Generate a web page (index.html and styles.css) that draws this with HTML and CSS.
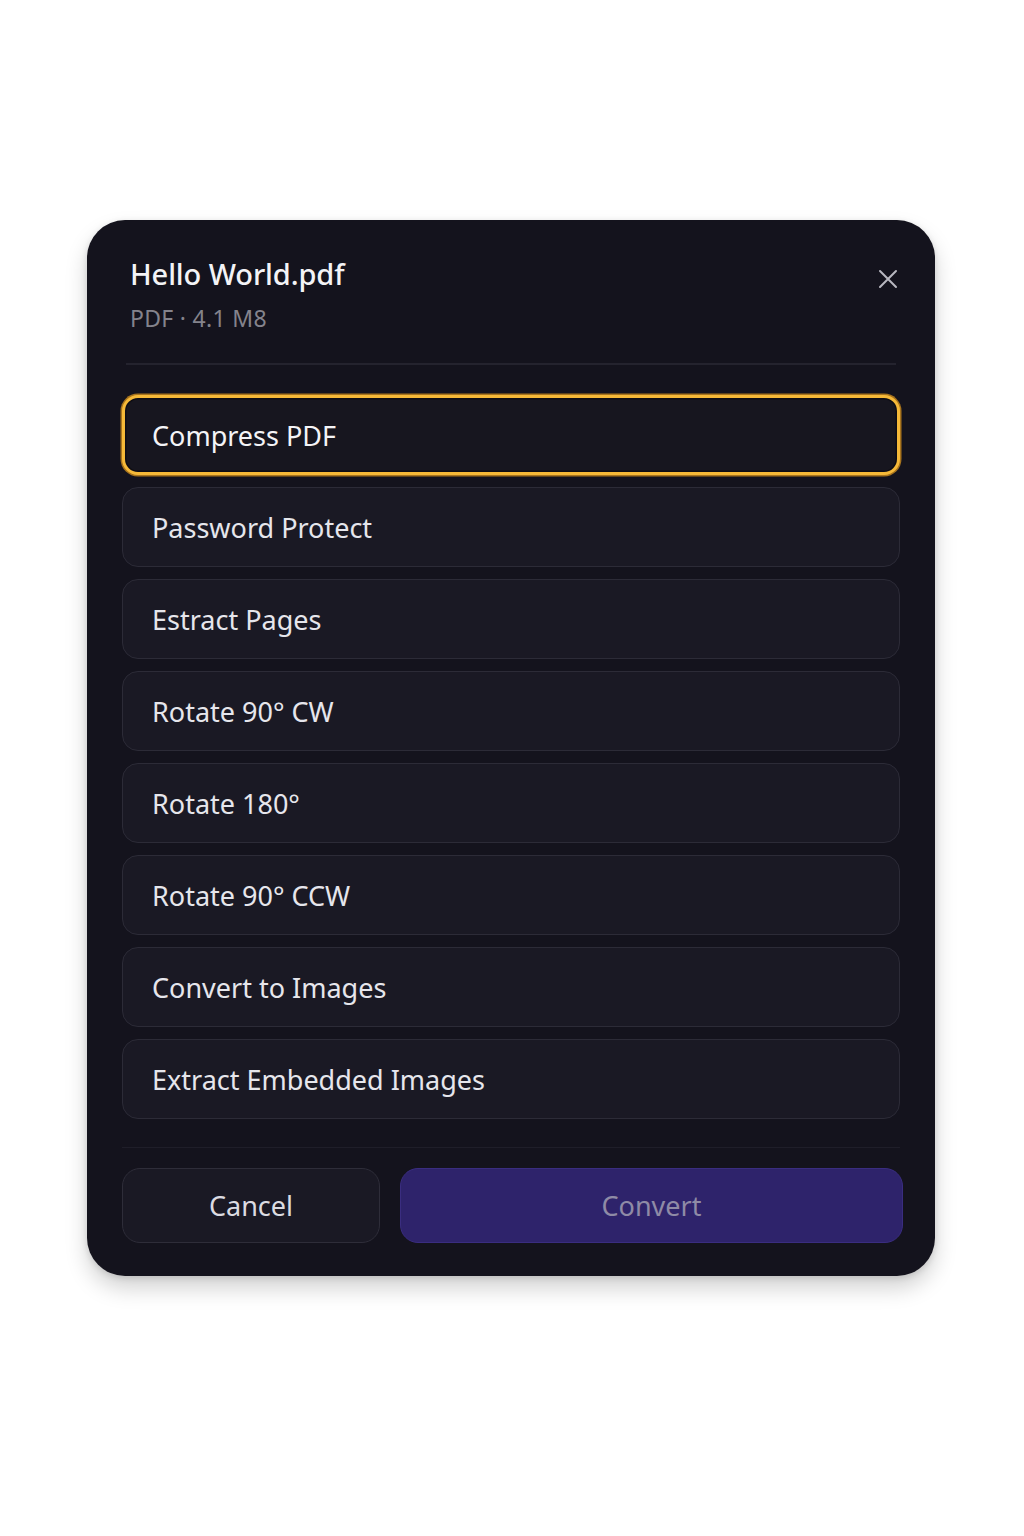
FILE: index.html
```html
<!DOCTYPE html>
<html lang="en">
<head>
<meta charset="utf-8">
<title>Hello World.pdf</title>
<link rel="stylesheet" href="styles.css">
</head>
<body>
<main class="stage">
  <section class="dialog">
    <header class="dialog-header">
      <div class="file-info">
        <h1 class="file-name">Hello World.pdf</h1>
        <p class="file-meta">PDF · 4.1 M8</p>
      </div>
      <button class="close-btn" aria-label="Close">
        <svg width="22" height="22" viewBox="0 0 22 22" fill="none" stroke="#b9b8c0" stroke-width="2" stroke-linecap="round">
          <path d="M3 3L19 19M19 3L3 19"/>
        </svg>
      </button>
    </header>
    <div class="divider"></div>
    <ul class="options">
      <li class="option selected">Compress PDF</li>
      <li class="option">Password Protect</li>
      <li class="option">Estract Pages</li>
      <li class="option">Rotate 90° CW</li>
      <li class="option">Rotate 180°</li>
      <li class="option">Rotate 90° CCW</li>
      <li class="option">Convert to Images</li>
      <li class="option">Extract Embedded Images</li>
    </ul>
    <div class="divider footer-divider"></div>
    <footer class="actions">
      <button class="btn btn-cancel">Cancel</button>
      <button class="btn btn-convert">Convert</button>
    </footer>
  </section>
</main>
</body>
</html>
```

FILE: styles.css
```css
* { box-sizing: border-box; }
html, body { margin: 0; padding: 0; background: #ffffff; }
body {
  font-family: "Noto Sans", "Open Sans", "DejaVu Sans", sans-serif;
  width: 1024px;
  height: 1536px;
}
.stage {
  padding-top: 220px;
  padding-left: 87px;
}
.dialog {
  width: 848px;
  background: #14131d;
  border-radius: 38px;
  padding: 34px 35px 33px 35px;
  box-shadow: 0 12px 22px rgba(0, 0, 0, 0.18), 0 2px 6px rgba(0, 0, 0, 0.12);
}
.dialog-header {
  display: flex;
  justify-content: space-between;
  align-items: flex-start;
  padding: 0 1px 0 8px;
}
.file-name {
  margin: 0;
  font-size: 29px;
  font-weight: 500;
  line-height: 40px;
  color: #f3f3f6;
  letter-spacing: -0.1px;
}
.file-meta {
  margin: 9px 0 0 0;
  font-size: 23px;
  line-height: 30px;
  color: #84838c;
  letter-spacing: 0.3px;
}
.close-btn {
  margin-top: 14px;
  width: 22px;
  height: 22px;
  padding: 0;
  border: none;
  background: none;
  display: flex;
}
.divider {
  height: 2px;
  background: #24232e;
  margin: 30px 4px 0 4px;
}
.options {
  list-style: none;
  margin: 30px 0 0 0;
  padding: 0;
  display: flex;
  flex-direction: column;
  gap: 12px;
}
.option {
  height: 80px;
  display: flex;
  align-items: center;
  padding-left: 29px;
  font-size: 27px;
  color: #e6e6ec;
  background: #1a1924;
  border: 1.5px solid #2c2b37;
  border-radius: 16px;
}
.option.selected {
  border: 3px solid #f6b938;
  box-shadow: 0 0 0 1.5px #a8741d, inset 0 0 0 1.5px #0e0d14;
  background: #17161f;
  color: #f4f4f7;
  padding-left: 27px;
}
.footer-divider {
  margin: 28px 0 0 0;
  height: 1px;
  background: #1f1e29;
}
.actions {
  display: flex;
  gap: 20px;
  margin-top: 20px;
  margin-right: -3px;
}
.btn {
  height: 75px;
  border-radius: 18px;
  font-family: inherit;
  font-size: 27px;
}
.btn-cancel {
  width: 258px;
  background: #1a1924;
  border: 1.5px solid #2e2d39;
  color: #dcdce2;
}
.btn-convert {
  flex: 1;
  background: #2e236b;
  border: 1.5px solid #3a2d80;
  color: #8f8ba6;
}
```
